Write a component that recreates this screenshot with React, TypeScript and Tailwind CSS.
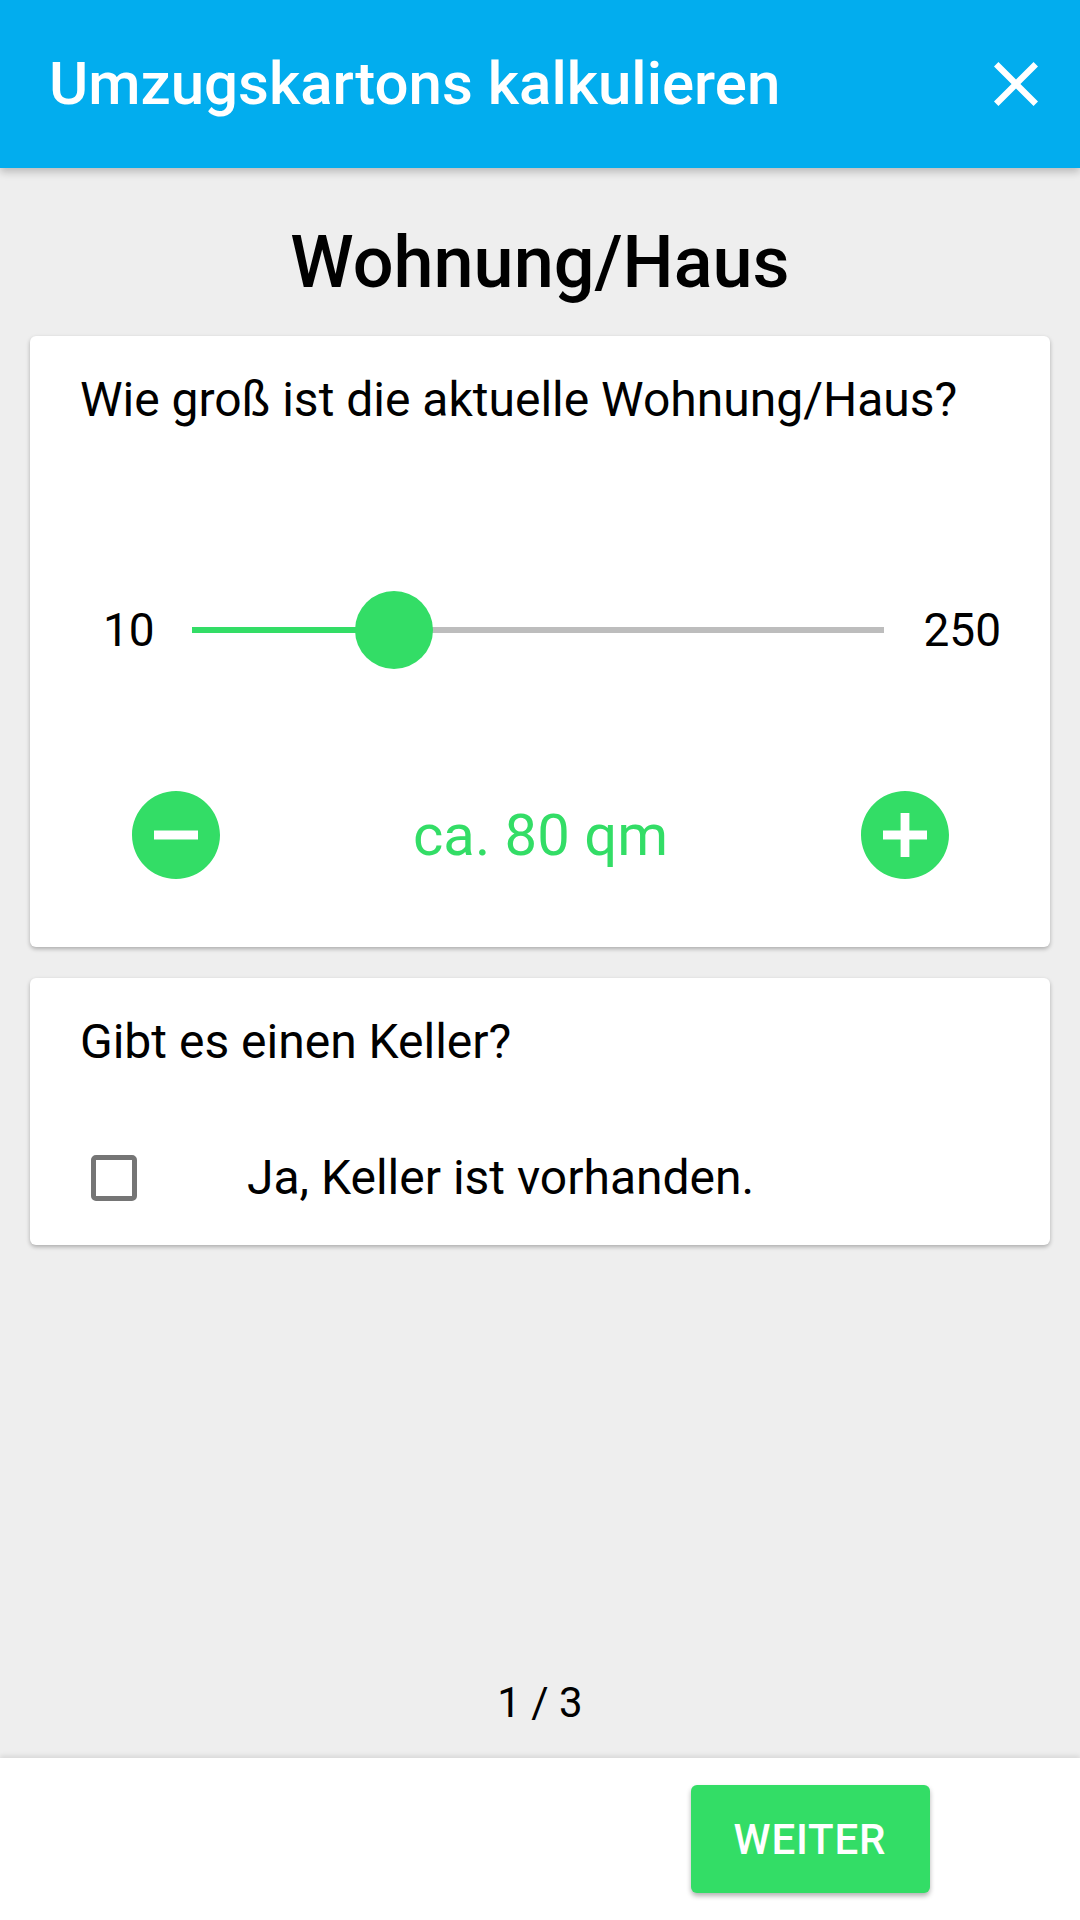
import React from "react";

function CloseIcon() {
  return (
    <svg width="44" height="44" viewBox="5 5 14 14" fill="#ffffff">
      <path d="M19 6.41L17.59 5 12 10.59 6.41 5 5 6.41 10.59 12 5 17.59 6.41 19 12 13.41 17.59 19 19 17.59 13.41 12z" />
    </svg>
  );
}

function MinusCircle() {
  return (
    <svg width="88" height="88" viewBox="2 2 20 20" fill="#33dd66">
      <path d="M12 2C6.48 2 2 6.48 2 12s4.48 10 10 10 10-4.48 10-10S17.52 2 12 2zm5 11H7v-2h10v2z" />
    </svg>
  );
}

function PlusCircle() {
  return (
    <svg width="88" height="88" viewBox="2 2 20 20" fill="#33dd66">
      <path d="M12 2C6.48 2 2 6.48 2 12s4.48 10 10 10 10-4.48 10-10S17.52 2 12 2zm5 11h-4v4h-2v-4H7v-2h4V7h2v4h4v2z" />
    </svg>
  );
}

export default function App() {
  const min = 10;
  const max = 250;
  const value = 80;
  const pct = ((value - min) / (max - min)) * 100;

  return (
    <div className="w-[1080px] h-[1920px] flex flex-col bg-[#eeeeee] font-['Roboto','Liberation_Sans',sans-serif] text-black overflow-hidden">
      {/* Header */}
      <header className="relative z-10 h-[168px] shrink-0 bg-[#02adee] flex items-center justify-between pl-[49px] pr-[42px] shadow-[0_4px_8px_rgba(0,0,0,0.22)]">
        <h1 className="text-[60px] leading-[70px] font-medium text-white">Umzugskartons kalkulieren</h1>
        <button className="w-[44px] h-[44px] flex items-center justify-center">
          <CloseIcon />
        </button>
      </header>

      {/* Content */}
      <main className="flex-1 flex flex-col px-[30px]">
        <h2 className="pt-[53px] text-center text-[72px] leading-[84px] font-medium">Wohnung/Haus</h2>

        {/* Card 1 */}
        <section className="mt-[31px] bg-white rounded-[6px] shadow-[0_2px_4px_rgba(0,0,0,0.28)] pl-[50px] pr-[49px] pt-[36px] pb-[68px]">
          <p className="text-[48px] leading-[56px]">Wie groß ist die aktuelle Wohnung/Haus?</p>

          <div className="mt-[163px] h-[78px] flex items-center pl-[23px]">
            <span className="text-[46px] leading-[56px]">10</span>
            <div className="ml-[37px] flex-1 relative h-[6px] bg-[#bdbdbd]">
              <div className="absolute left-0 top-0 h-full bg-[#33dd66]" style={{ width: `${pct}%` }} />
              <div
                className="absolute top-1/2 w-[78px] h-[78px] -translate-x-1/2 -translate-y-1/2 rounded-full bg-[#33dd66]"
                style={{ left: `${pct}%` }}
              />
            </div>
            <span className="ml-[39px] text-[46px] leading-[56px]">250</span>
          </div>

          <div className="mt-[122px] flex items-center justify-between px-[52px]">
            <button className="w-[88px] h-[88px]">
              <MinusCircle />
            </button>
            <span className="text-[58px] leading-[68px] text-[#33dd66]">ca. 80 qm</span>
            <button className="w-[88px] h-[88px]">
              <PlusCircle />
            </button>
          </div>
        </section>

        {/* Card 2 */}
        <section className="mt-[31px] bg-white rounded-[6px] shadow-[0_2px_4px_rgba(0,0,0,0.28)] pl-[50px] pr-[49px] pt-[36px] pb-[39px]">
          <p className="text-[48px] leading-[56px]">Gibt es einen Keller?</p>
          <label className="mt-[80px] h-[56px] flex items-center">
            <span className="ml-[11px] w-[46px] h-[46px] rounded-[5px] border-[5px] border-[#757575] bg-white" />
            <span className="ml-[110px] text-[48px] leading-[56px]">Ja, Keller ist vorhanden.</span>
          </label>
        </section>

        <div className="flex-1" />
        <p className="text-center text-[42px] leading-[50px] mb-[30px]">1 / 3</p>
      </main>

      {/* Bottom bar */}
      <footer className="relative h-[162px] shrink-0 bg-white grid grid-cols-2 items-center shadow-[0_-2px_5px_rgba(0,0,0,0.1)]">
        <div />
        <div className="flex justify-center">
          <button className="w-[239px] h-[108px] rounded-[6px] bg-[#33dd66] text-white text-[42px] font-medium tracking-[0.02em] shadow-[0_3px_5px_rgba(0,0,0,0.3)]">
            WEITER
          </button>
        </div>
      </footer>
    </div>
  );
}
